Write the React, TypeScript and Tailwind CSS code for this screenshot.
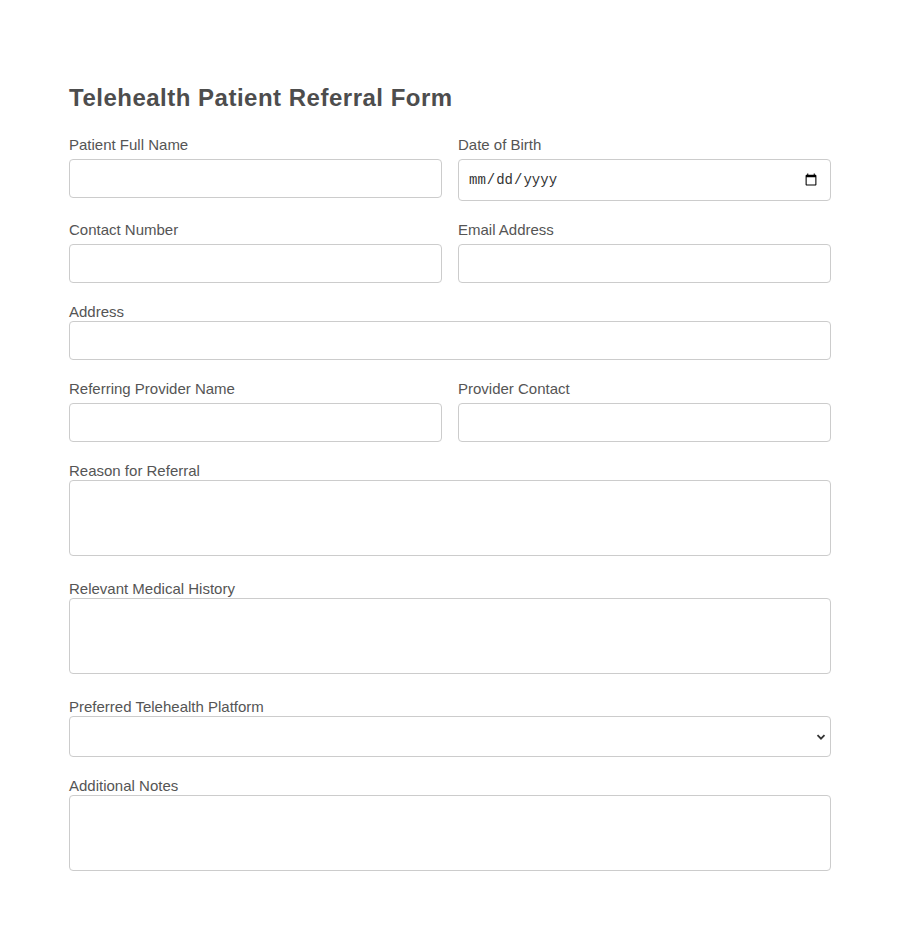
import React from "react";

const inputCls =
  "block w-full h-[39px] px-[10px] border border-[#ccc] rounded-[4px] bg-white text-[15px] text-[#333] outline-none";
const labelCls = "block text-[15px] leading-[17px] text-[#555]";
const areaCls =
  "block w-full h-[76px] px-[10px] py-[10px] border border-[#ccc] rounded-[4px] bg-white text-[15px] text-[#333] outline-none resize-none";

export default function App() {
  return (
    <div className="min-h-screen bg-white font-['Liberation_Sans',Arial,sans-serif]">
      <div className="mx-auto w-[762px] pt-[84px] pb-10">
        <h2 className="text-[24px] leading-[28px] font-bold tracking-[0.5px] text-[#4d4d4d] mb-[24px]">
          Telehealth Patient Referral Form
        </h2>
        <form>
          <div className="grid grid-cols-2 gap-x-4">
            <div>
              <label className={`${labelCls} mb-[6px]`}>Patient Full Name</label>
              <input type="text" className={inputCls} />
            </div>
            <div>
              <label className={`${labelCls} mb-[6px]`}>Date of Birth</label>
              <input
                type="date"
                className="block w-full h-[42px] pl-[9px] pr-[10px] border border-[#ccc] rounded-[4px] bg-white text-[14px] font-mono text-[#333] outline-none"
              />
            </div>
          </div>

          <div className="grid grid-cols-2 gap-x-4 mt-5">
            <div>
              <label className={`${labelCls} mb-[6px]`}>Contact Number</label>
              <input type="tel" className={inputCls} />
            </div>
            <div>
              <label className={`${labelCls} mb-[6px]`}>Email Address</label>
              <input type="email" className={inputCls} />
            </div>
          </div>

          <div className="mt-5">
            <label className={`${labelCls} mb-px`}>Address</label>
            <input type="text" className={inputCls} />
          </div>

          <div className="grid grid-cols-2 gap-x-4 mt-5">
            <div>
              <label className={`${labelCls} mb-[6px]`}>Referring Provider Name</label>
              <input type="text" className={inputCls} />
            </div>
            <div>
              <label className={`${labelCls} mb-[6px]`}>Provider Contact</label>
              <input type="text" className={inputCls} />
            </div>
          </div>

          <div className="mt-5">
            <label className={`${labelCls} mb-px`}>Reason for Referral</label>
            <textarea className={areaCls} />
          </div>

          <div className="mt-[24px]">
            <label className={`${labelCls} mb-px`}>Relevant Medical History</label>
            <textarea className={areaCls} />
          </div>

          <div className="mt-[24px]">
            <label className={`${labelCls} mb-px`}>Preferred Telehealth Platform</label>
            <div className="relative">
              <select className="block w-full h-[41px] px-[10px] border border-[#ccc] rounded-[4px] bg-white text-[15px] text-[#333] outline-none appearance-none">
                <option value=""></option>
                <option>Zoom</option>
                <option>Microsoft Teams</option>
                <option>Doxy.me</option>
              </select>
              <svg
                className="pointer-events-none absolute right-[5px] top-1/2 -translate-y-1/2"
                width="10"
                height="10"
                viewBox="0 0 10 10"
              >
                <path d="M1.5 3.2 L5 6.7 L8.5 3.2" fill="none" stroke="#333" strokeWidth="1.8" />
              </svg>
            </div>
          </div>

          <div className="mt-5">
            <label className={`${labelCls} mb-px`}>Additional Notes</label>
            <textarea className={areaCls} />
          </div>
        </form>
      </div>
    </div>
  );
}
